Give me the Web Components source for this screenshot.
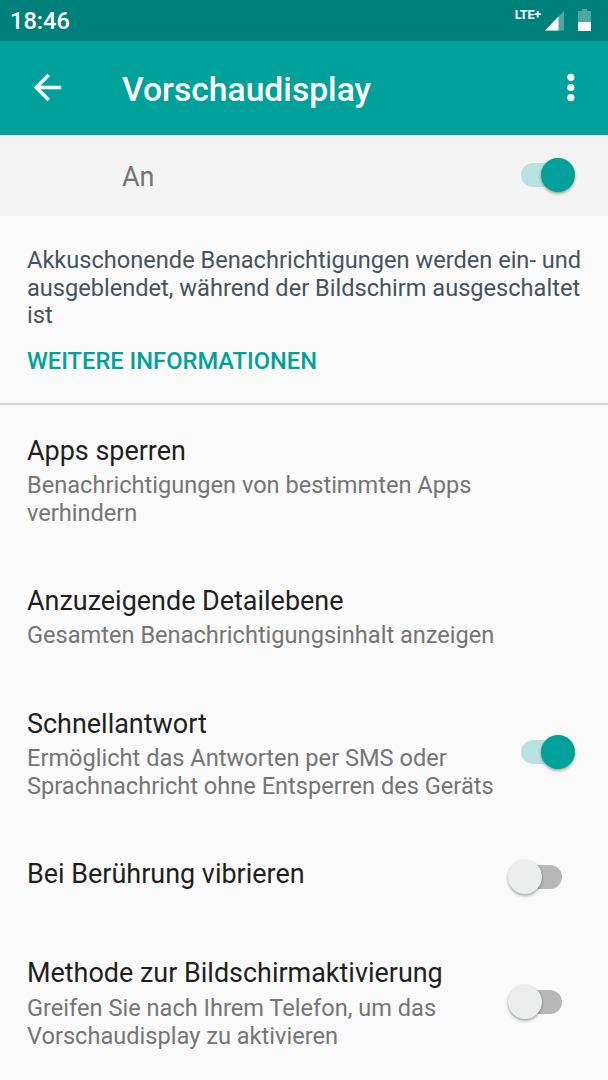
<!DOCTYPE html>
<html lang="de">
<head>
<meta charset="utf-8">
<title>Vorschaudisplay</title>
<style>
body {
  margin: 0;
  width: 608px;
  height: 1080px;
  overflow: hidden;
  background: #fafafa;
  font-family: Roboto, sans-serif;
}
</style>
</head>
<body>
<settings-screen></settings-screen>
<script>
class StatusBar extends HTMLElement {
  constructor() {
    super();
    const css = `
    <style>
    :host {
      display: flex;
      align-items: flex-start;
      box-sizing: border-box;
      height: 40.5px;
      padding-inline: 10px 17px;
      background: #00807a;
      color: white;
    }
    .time {
      flex: 1;
      padding-top: 7px;
      font-size: 23.6px;
      font-weight: 500;
      line-height: 28px;
    }
    .net {
      padding-top: 8px;
      margin-right: 4px;
      font-size: 12.6px;
      font-weight: 700;
      line-height: 14px;
      letter-spacing: -0.2px;
    }
    svg { display: block; }
    .signal { margin: 11px 14px 0 0; }
    .battery { margin-top: 9px; }
    </style>`;
    const html = `
    <span class="time">18:46</span>
    <span class="net">LTE+</span>
    <svg class="signal" width="19" height="20" viewBox="0 0 19 20">
      <path d="M19 0V19.500H0Z" fill="#fff" fill-opacity=".3"/>
      <path d="M13.500 5.500V19.500H0Z" fill="#fff"/>
    </svg>
    <svg class="battery" width="13" height="22" viewBox="0 0 13 22">
      <path d="M4 0H9V2H12Q13 2 13 3V13H0V3Q0 2 1 2H4Z" fill="#fff" fill-opacity=".3"/>
      <path d="M0 13H13V21Q13 22 12 22H1Q0 22 0 21Z" fill="#fff"/>
    </svg>`;
    this.attachShadow({ mode: "open" }).innerHTML = `${css}${html}`;
  }
}

class AppBar extends HTMLElement {
  constructor() {
    super();
    const css = `
    <style>
    :host {
      display: flex;
      align-items: center;
      box-sizing: border-box;
      height: 94.5px;
      padding-inline: 27px;
      background: #00a19a;
      color: white;
    }
    h1 {
      flex: 1;
      margin: 4px 0 0 54px;
      font-size: 33.65px;
      font-weight: 500;
      line-height: 40px;
    }
    svg { display: block; }
    </style>`;
    const html = `
    <svg width="41" height="41" viewBox="0 0 24 24">
      <path d="M20 11H7.830l5.590-5.590L12 4l-8 8 8 8 1.410-1.410L7.830 13H20v-2z" fill="#fff"/>
    </svg>
    <h1><slot></slot></h1>
    <svg width="20" height="41" viewBox="0 0 20 41">
      <g fill="#fff"><circle cx="9.800" cy="10.300" r="3.600"/><circle cx="9.800" cy="20.500" r="3.600"/><circle cx="9.800" cy="30.700" r="3.600"/></g>
    </svg>`;
    this.attachShadow({ mode: "open" }).innerHTML = `${css}${html}`;
  }
}

class ToggleSwitch extends HTMLElement {
  constructor() {
    super();
    const css = `
    <style>
    :host {
      display: grid;
      align-items: center;
      flex: none;
      width: 67px;
      height: 34px;
    }
    .track, .thumb { grid-area: 1 / 1; }
    .track {
      justify-self: center;
      width: 41px;
      height: 24px;
      border-radius: 12px;
      background: #b7b7b7;
    }
    .thumb {
      width: 34px;
      height: 34px;
      border-radius: 50%;
      background: #eceeed;
      box-shadow: 0 2px 3px rgb(0 0 0 / .3), 0 0 2px rgb(0 0 0 / .12);
    }
    :host([checked]) .track { background: #b8e3e1; }
    :host([checked]) .thumb {
      justify-self: end;
      background: #00a19a;
    }
    </style>`;
    const html = `<div class="track"></div><div class="thumb"></div>`;
    this.attachShadow({ mode: "open" }).innerHTML = `${css}${html}`;
  }
}

class SwitchBar extends HTMLElement {
  constructor() {
    super();
    const css = `
    <style>
    :host {
      display: flex;
      align-items: center;
      justify-content: space-between;
      box-sizing: border-box;
      height: 81px;
      padding: 0 33px 1px 122px;
      background: #f4f4f4;
      color: #737373;
      font-size: 27px;
    }
    span { padding-top: 4px; }
    </style>`;
    const html = `<span><slot></slot></span><toggle-switch checked></toggle-switch>`;
    this.attachShadow({ mode: "open" }).innerHTML = `${css}${html}`;
  }
}

class InfoBlock extends HTMLElement {
  constructor() {
    super();
    const css = `
    <style>
    :host {
      display: block;
      box-sizing: border-box;
      height: 189px;
      padding: 31px 20px 0 27px;
      border-bottom: 2px solid #d3d3d3;
      color: #455360;
      font-size: 23.6px;
      line-height: 27.7px;
    }
    p { margin: 0 0 18px; }
    .link {
      color: #00a19a;
      font-size: 23.7px;
      font-weight: 500;
    }
    </style>`;
    const html = `<p><slot></slot></p><div class="link"><slot name="link"></slot></div>`;
    this.attachShadow({ mode: "open" }).innerHTML = `${css}${html}`;
  }
}

class PreferenceItem extends HTMLElement {
  constructor() {
    super();
    const css = `
    <style>
    :host {
      display: flex;
      align-items: center;
      box-sizing: border-box;
      min-height: 99.3px;
      padding-inline: 27px 33px;
    }
    .text {
      flex: 1;
      align-self: flex-start;
      padding-block: 30.5px 28px;
    }
    .title {
      color: #1f1f1f;
      font-size: 26.95px;
      line-height: 31.7px;
    }
    .summary {
      color: #757575;
      font-size: 23.6px;
      line-height: 27.7px;
    }
    ::slotted([slot="summary"]) {
      display: block;
      padding-top: 4.8px;
    }
    ::slotted([slot="widget"]) {
      margin-bottom: 2px;
    }
    </style>`;
    const html = `
    <div class="text">
      <div class="title"><slot></slot></div>
      <div class="summary"><slot name="summary"></slot></div>
    </div>
    <slot name="widget"></slot>`;
    this.attachShadow({ mode: "open" }).innerHTML = `${css}${html}`;
  }
}

class SettingsScreen extends HTMLElement {
  constructor() {
    super();
    const css = `
    <style>
    :host { display: block; }
    </style>`;
    const html = `
    <status-bar></status-bar>
    <app-bar>Vorschaudisplay</app-bar>
    <switch-bar>An</switch-bar>
    <info-block>Akkuschonende Benachrichtigungen werden ein- und<br>ausgeblendet, während der Bildschirm ausgeschaltet<br>ist<span slot="link">WEITERE INFORMATIONEN</span></info-block>
    <preference-item>Apps sperren
      <span slot="summary">Benachrichtigungen von bestimmten Apps<br>verhindern</span>
    </preference-item>
    <preference-item>Anzuzeigende Detailebene
      <span slot="summary">Gesamten Benachrichtigungsinhalt anzeigen</span>
    </preference-item>
    <preference-item>Schnellantwort
      <span slot="summary">Ermöglicht das Antworten per SMS oder<br>Sprachnachricht ohne Entsperren des Geräts</span>
      <toggle-switch slot="widget" checked></toggle-switch>
    </preference-item>
    <preference-item>Bei Berührung vibrieren
      <toggle-switch slot="widget"></toggle-switch>
    </preference-item>
    <preference-item>Methode zur Bildschirmaktivierung
      <span slot="summary">Greifen Sie nach Ihrem Telefon, um das<br>Vorschaudisplay zu aktivieren</span>
      <toggle-switch slot="widget"></toggle-switch>
    </preference-item>`;
    this.attachShadow({ mode: "open" }).innerHTML = `${css}${html}`;
  }
}

customElements.define("status-bar", StatusBar);
customElements.define("app-bar", AppBar);
customElements.define("toggle-switch", ToggleSwitch);
customElements.define("switch-bar", SwitchBar);
customElements.define("info-block", InfoBlock);
customElements.define("preference-item", PreferenceItem);
customElements.define("settings-screen", SettingsScreen);
</script>
</body>
</html>
